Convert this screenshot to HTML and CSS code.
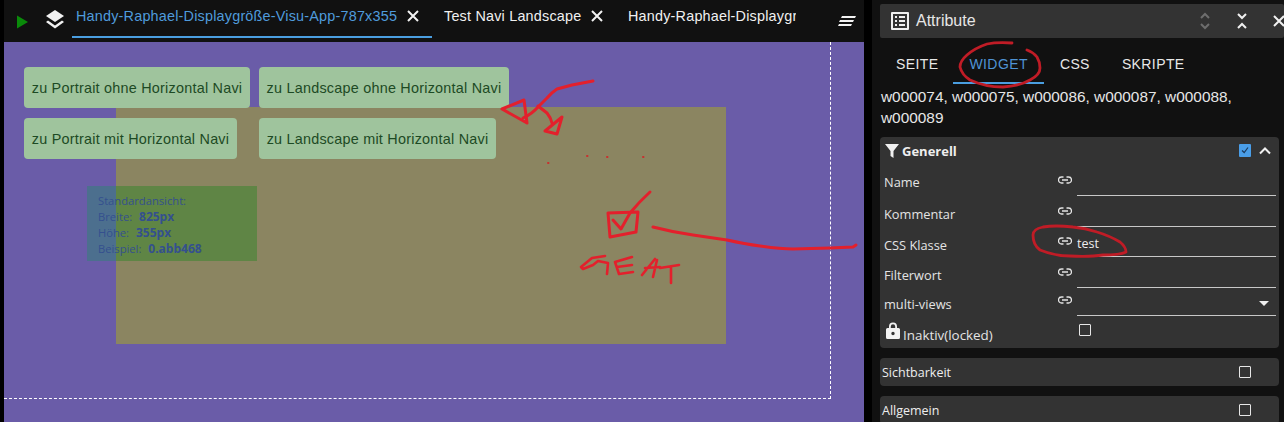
FILE: index.html
```html
<!DOCTYPE html>
<html lang="de">
<head>
<meta charset="utf-8">
<title>Attribute</title>
<link rel="stylesheet" href="styles.css">
</head>
<body>
<div class="app">
  <main class="editor">
    <header class="tabbar">
      <svg class="play" viewBox="0 0 12 14"><path d="M0 0L12 7L0 14Z"/></svg>
      <svg class="layers" viewBox="0 0 20 20"><path d="M10 0L19 6L10 12L1 6Z"/><path d="M3 10.5L1 12L10 18.5L19 12L17 10.5L10 15.5Z"/></svg>
      <div class="tab active"><span class="tab-title t1">Handy-Raphael-Displaygröße-Visu-App-787x355</span><svg class="x" viewBox="0 0 12 12"><path d="M1 1L11 11M11 1L1 11"/></svg></div>
      <div class="tab"><span class="tab-title t2">Test Navi Landscape</span><svg class="x" viewBox="0 0 12 12"><path d="M1 1L11 11M11 1L1 11"/></svg></div>
      <div class="tab clipped"><span class="tab-title t3">Handy-Raphael-Displaygröße</span></div>
      <svg class="sort" viewBox="0 0 18 10"><path d="M4 0H18L17 2H3ZM2 4H16L15 6H1ZM1 8H14L13 10H0Z"/></svg>
    </header>
    <section class="canvas">
      <div class="olive"></div>
      <div class="frame"></div>
      <button class="nav b1">zu Portrait ohne Horizontal Navi</button>
      <button class="nav b2">zu Landscape ohne Horizontal Navi</button>
      <button class="nav b3">zu Portrait mit Horizontal Navi</button>
      <button class="nav b4">zu Landscape mit Horizontal Navi</button>
      <div class="info">
        <div>Standardansicht:</div>
        <div>Breite: <b>825px</b></div>
        <div>Höhe: <b>355px</b></div>
        <div>Beispiel: <b>0.abb468</b></div>
      </div>
    </section>
  </main>
  <aside class="panel">
    <header class="panel-head">
      <svg class="list-ic" viewBox="0 0 18 18"><path fill-rule="evenodd" d="M1 0H17A1 1 0 0 1 18 1V17A1 1 0 0 1 17 18H1A1 1 0 0 1 0 17V1A1 1 0 0 1 1 0ZM2 2V16H16V2ZM4 4H6V6H4ZM8 4H14V6H8ZM4 8H6V10H4ZM8 8H14V10H8ZM4 12H6V14H4ZM8 12H14V14H8Z"/></svg>
      <span class="panel-title">Attribute</span>
      <svg class="updown" viewBox="0 0 12 18"><path d="M2 6L6 2L10 6M2 12L6 16L10 12"/></svg>
      <svg class="fold" viewBox="0 0 12 18"><path d="M2 2L6 6L10 2M2 16L6 12L10 16"/></svg>
      <svg class="x head-x" viewBox="0 0 12 12"><path d="M1 1L11 11M11 1L1 11"/></svg>
    </header>
    <nav class="ptabs">
      <span class="ptab first">SEITE</span>
      <span class="ptab on">WIDGET</span>
      <span class="ptab">CSS</span>
      <span class="ptab">SKRIPTE</span>
    </nav>
    <p class="ids">w000074, w000075, w000086, w000087, w000088, w000089</p>
    <section class="group open">
      <div class="group-head">
        <svg class="funnel" viewBox="0 0 14 14"><path d="M0 0H14L8.5 7V14L5.5 12V7Z"/></svg>
        <b class="group-title">Generell</b>
        <span class="check on"><svg viewBox="0 0 12 12"><path d="M3 6.5L5.2 8.5L9 3.5"/></svg></span>
        <svg class="chev" viewBox="0 0 12 8"><path d="M1 6.5L6 1.5L11 6.5"/></svg>
      </div>
      <div class="row r30"><label class="lbl">Name</label><svg class="link" viewBox="0 0 14 8"><path d="M5.5 1H3.5A3 3 0 0 0 3.5 7H5.5M8.5 1H10.5A3 3 0 0 1 10.5 7H8.5M4 4H10"/></svg><div class="field"></div></div>
      <div class="row r31"><label class="lbl">Kommentar</label><svg class="link" viewBox="0 0 14 8"><path d="M5.5 1H3.5A3 3 0 0 0 3.5 7H5.5M8.5 1H10.5A3 3 0 0 1 10.5 7H8.5M4 4H10"/></svg><div class="field"></div></div>
      <div class="row r30"><label class="lbl">CSS Klasse</label><svg class="link" viewBox="0 0 14 8"><path d="M5.5 1H3.5A3 3 0 0 0 3.5 7H5.5M8.5 1H10.5A3 3 0 0 1 10.5 7H8.5M4 4H10"/></svg><div class="field">test</div></div>
      <div class="row r31"><label class="lbl">Filterwort</label><svg class="link" viewBox="0 0 14 8"><path d="M5.5 1H3.5A3 3 0 0 0 3.5 7H5.5M8.5 1H10.5A3 3 0 0 1 10.5 7H8.5M4 4H10"/></svg><div class="field"></div></div>
      <div class="row r28"><label class="lbl">multi-views</label><svg class="link" viewBox="0 0 14 8"><path d="M5.5 1H3.5A3 3 0 0 0 3.5 7H5.5M8.5 1H10.5A3 3 0 0 1 10.5 7H8.5M4 4H10"/></svg><div class="field select"><i class="caret"></i></div></div>
      <div class="row-lock">
        <label class="lbl lock-lbl"><svg class="lock" viewBox="0 0 14 17"><path fill-rule="evenodd" d="M3 6V4.5A4 4 0 0 1 11 4.5V6H12.5A1.5 1.5 0 0 1 14 7.5V15.5A1.5 1.5 0 0 1 12.5 17H1.5A1.5 1.5 0 0 1 0 15.5V7.5A1.5 1.5 0 0 1 1.5 6ZM4.8 6H9.2V4.5A2.2 2.2 0 0 0 4.8 4.5ZM7 9.8A1.7 1.7 0 1 0 7 13.2A1.7 1.7 0 1 0 7 9.8Z"/></svg>Inaktiv(locked)</label>
        <span class="check small"></span>
      </div>
    </section>
    <section class="group closed"><span class="closed-title">Sichtbarkeit</span><span class="check"></span></section>
    <section class="group closed"><span class="closed-title">Allgemein</span><span class="check"></span></section>
  </aside>
</div>
<svg class="ink" viewBox="0 0 1284 422">
  <g class="ink-bright">
    <path d="M593 81L572 85L557 89Q551 93 547 98L538 107Q532 114 523 118"/>
    <path d="M502 109L524 100L527 123Z"/>
    <path d="M538 106L547 113Q551 118 552 123"/>
    <path d="M545 131L562 117L557 134Z"/>
    <path class="dot" d="M548 163h.5M587 156h.5M607 157h.5M643 157h.5"/>
    <path d="M608 213L638 212L636 232L610 237Z"/>
    <path d="M613 220L621 229L630 213Q640 201 650 192"/>
    <path d="M653 227Q672 232 693 235L727 240Q745 244 760 246Q780 249 793 249L830 248L853 247L856 245"/>
    <path class="thin" d="M605 256L592 258L581 267L583 269L593 265L598 261L608 263L607 274"/>
    <path class="thin" d="M632 257L615 262L619 274L633 272M617 267L632 265"/>
    <path class="thin" d="M642 275L655 259M645 268L660 267M657 260L653 277"/>
    <path class="thin" d="M660 268L679 265M671 267L671 283"/>
  </g>
  <g class="ink-dark">
    <path d="M1012 43Q997 42 987 44Q975 48 967 55Q960 61 960 67Q962 75 970 80Q985 87 1003 87Q1020 86 1030 80Q1040 75 1040 68Q1040 62 1037 57Q1033 52 1027 50"/>
    <path d="M1073 227Q1055 225 1043 227Q1033 229 1033 235Q1033 245 1040 250Q1055 256 1070 256Q1090 257 1103 255Q1120 255 1126 252Q1126 247 1120 242Q1110 236 1097 232Q1085 228 1073 227Z"/>
  </g>
</svg>
</body>
</html>
```
FILE: styles.css
```css
* { box-sizing: border-box; }
html, body { margin: 0; height: 422px; overflow: hidden; background: #000; }
body { position: relative; font-family: "Liberation Sans", Arial, sans-serif; color: #e8e8e8; }
.app { display: flex; width: 1284px; height: 422px; }

/* editor */
.editor { width: 860px; margin-left: 4px; display: flex; flex-direction: column; flex: none; }
.tabbar { height: 42px; background: #111; display: flex; align-items: flex-start; flex: none; position: relative; }
.play { width: 11px; height: 14px; margin: 15px 0 0 13px; fill: #0a8a0a; flex: none; }
.layers { width: 20px; height: 20px; margin: 10px 0 0 17px; fill: #f2f2f2; flex: none; }
.tab { height: 38px; display: flex; align-items: center; border-bottom: 2px solid transparent; padding: 0 14px 4px 4px; flex: none; }
.tab.active { width: 360px; margin-left: 7px; border-bottom-color: #4a9ee0; color: #4f9bdc; }
.tab-title { font-size: 14.4px; letter-spacing: .2px; white-space: nowrap; }
.tab:not(.active) { color: #f0f0f0; }
.tab:nth-of-type(2) { padding-left: 12px; width: 184px; }
.tab.clipped { width: 168px; padding: 0 0 4px; overflow: hidden; margin-left: 12px; }
.x { width: 12px; height: 12px; fill: none; stroke: #f2f2f2; stroke-width: 2; margin-left: 10px; flex: none; }
.sort { width: 18px; height: 10px; fill: #f2f2f2; position: absolute; left: 834px; top: 16px; }

/* canvas */
.canvas { flex: 1; background: #6a5ca8; position: relative; overflow: hidden; }
.olive { position: absolute; left: 112px; top: 65px; width: 610px; height: 237px; background: #8b8561; }
.frame { position: absolute; left: 0; top: 0; width: 827px; height: 357px; border-right: 1px dashed #fff; border-bottom: 1px dashed #fff; }
.nav { position: absolute; height: 41px; padding: 0; background: #9fc49d; border: 0; border-radius: 4px; color: #1d4a24; font: 14.4px "Liberation Sans", Arial, sans-serif; letter-spacing: .23px; white-space: nowrap; }
.b1 { left: 20px; top: 25px; width: 226px; }
.b2 { left: 255px; top: 25px; width: 250px; }
.b3 { left: 20px; top: 76px; width: 213px; }
.b4 { left: 255px; top: 76px; width: 237px; }
.info { position: absolute; left: 83px; top: 144px; width: 170px; height: 75px; padding: 7px 0 0 11px; background: linear-gradient(to right, #4c6f8e 29px, #5f8545 29px); color: #34508e; font: 11.2px/16px "Open Sans", sans-serif; }
.info b { font-size: 12px; font-weight: 700; margin-left: 4px; }

/* panel */
.panel { width: 412px; flex: none; margin-left: 8px; background: #111; padding: 4px 0 0 8px; overflow: hidden; }
.panel-head { height: 34px; background: #333; border-radius: 2px; display: flex; align-items: center; position: relative; }
.list-ic { width: 18px; height: 18px; margin-left: 11px; fill: #f0f0f0; flex: none; }
.panel-title { margin-left: 7px; font-size: 16px; color: #e6e6e6; }
.updown, .fold { position: absolute; top: 8px; width: 12px; height: 18px; fill: none; stroke-width: 2; }
.updown { left: 319px; stroke: #6e6e6e; }
.fold { left: 356px; stroke: #f0f0f0; }
.head-x { position: absolute; left: 393px; top: 11px; margin: 0; }
.ptabs { display: flex; height: 42px; margin-top: 4px; }
.ptab { padding: 14px 16px 0; font-size: 14px; letter-spacing: .4px; color: #e8e8e8; white-space: nowrap; }
.ptab.first { padding-right: 15px; }
.ptab.on { color: #4f93d4; border-bottom: 2px solid #4a9ee0; }
.ids { margin: 2px 0 0; height: 51px; width: 396px; padding-left: 1px; font-size: 15.4px; line-height: 21px; color: #e6e6e6; }
.group { width: 399px; background: #333; border-radius: 4px; font-family: "Open Sans", sans-serif; }
.group.open { height: 211px; }
.group-head { height: 29px; padding-bottom: 2px; display: flex; align-items: center; position: relative; }
.funnel { width: 14px; height: 14px; margin-left: 5px; fill: #f0f0f0; flex: none; }
.group-title { margin-left: 3px; font-size: 13px; color: #eee; }
.group-head .check { position: absolute; left: 359px; top: 7px; }
.check { width: 12px; height: 12px; border: 1.5px solid #e6e6e6; border-radius: 1px; display: block; flex: none; }
.check.on { background: #4a9ee8; border: 0; width: 12px; height: 13px; }
.check.on svg { width: 12px; height: 12px; fill: none; stroke: #1b3a5c; stroke-width: 1.2; display: block; }
.chev { position: absolute; left: 379px; top: 10px; width: 12px; height: 8px; fill: none; stroke: #f0f0f0; stroke-width: 2; }
.row { display: grid; grid-template-columns: 174px 19px 199px; padding-left: 4px; align-items: end; }
.r30 { height: 30px; }
.r31 { height: 31px; }
.r28 { height: 28px; }
.lbl { font-size: 12.8px; line-height: 20px; padding-bottom: 2px; color: #e4e4e4; white-space: nowrap; }
.row:nth-child(2) .lbl { padding-bottom: 4px; }
.row:nth-child(3) .lbl, .row:nth-child(5) .lbl { padding-bottom: 3px; }
.link { width: 14px; height: 8px; fill: none; stroke: #e4e4e4; stroke-width: 1.3; margin-bottom: 12px; }
.field { height: 100%; border-bottom: 1px solid #c8c8c8; font-size: 12.5px; line-height: 20px; color: #eee; padding-top: 7px; position: relative; }
.caret { position: absolute; right: 7px; top: 13px; border: 5px solid transparent; border-top-color: #eee; border-bottom: 0; }
.row-lock { display: grid; grid-template-columns: 195px 12px; padding: 0 0 0 4px; height: 32px; }
.lock-lbl { display: flex; align-items: flex-end; height: 29px; padding: 0 0 0 2px; font-size: 13.4px; }
.lock { width: 14px; height: 17px; fill: #f2f2f2; margin: 0 3px 6px 0; flex: none; }
.check.small { margin-top: 8px; }
.group.closed { margin-top: 10px; height: 28px; display: flex; align-items: center; padding: 0 28px 0 2px; justify-content: space-between; }
.closed-title { font-size: 12.5px; color: #eee; }

/* pen annotations */
.ink { position: absolute; left: 0; top: 0; width: 1284px; height: 422px; fill: none; stroke-linecap: round; stroke-linejoin: round; pointer-events: none; }
.ink-bright { stroke: #e3202c; stroke-width: 3; }
.ink-bright .thin { stroke-width: 2.6; }
.ink-bright .dot { stroke: #c9302f; stroke-width: 2; }
.ink-dark { stroke: #c01c26; stroke-width: 2.8; }
```
